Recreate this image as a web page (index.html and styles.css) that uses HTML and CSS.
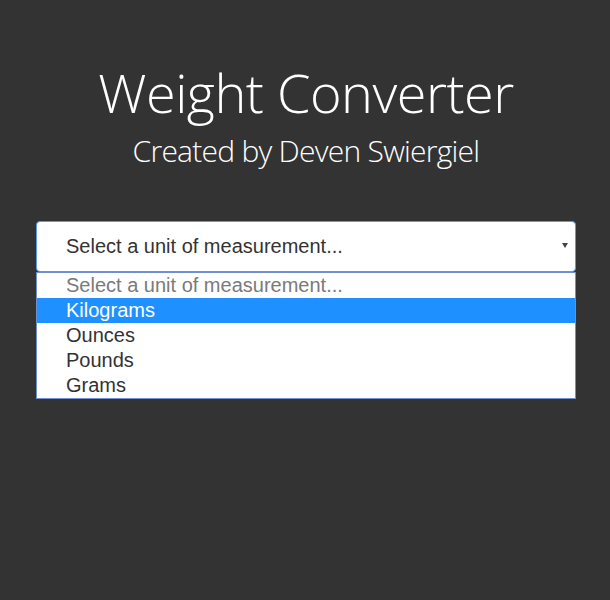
FILE: index.html
```html
<!DOCTYPE html>
<html>
<head>
<meta charset="utf-8">
<link rel="stylesheet" href="styles.css">
</head>
<body>
<div class="page">
  <header class="header">
    <h1 class="title">Weight Converter</h1>
    <p class="subtitle">Created by Deven Swiergiel</p>
  </header>
  <div class="picker">
    <div class="select">
      <span class="select-text">Select a unit of measurement...</span>
      <span class="arrow"></span>
    </div>
    <ul class="options">
      <li class="option placeholder">Select a unit of measurement...</li>
      <li class="option active">Kilograms</li>
      <li class="option">Ounces</li>
      <li class="option">Pounds</li>
      <li class="option">Grams</li>
    </ul>
  </div>
</div>
</body>
</html>
```
FILE: styles.css
```css
html, body {
  margin: 0;
  padding: 0;
  background: #333333;
  height: 100%;
}
.page {
  width: 540px;
  margin: 0 0 0 36px;
  padding-top: 61px;
}
.header {
  text-align: center;
  color: #ffffff;
  font-family: "Open Sans", "Noto Sans", sans-serif;
  font-weight: 300;
}
.title {
  margin: 0;
  font-size: 54px;
  line-height: 62px;
  font-weight: 300;
  letter-spacing: -0.5px;
}
.subtitle {
  margin: 9px 0 0;
  font-size: 30px;
  line-height: 38px;
  font-weight: 300;
  letter-spacing: -0.75px;
}
.picker {
  margin-top: 51px;
  font-family: "Liberation Sans", Arial, sans-serif;
  font-size: 20px;
}
.select {
  height: 49px;
  border: 1px solid #5b9ae6;
  border-radius: 4px;
  background: #ffffff;
  display: flex;
  align-items: center;
  justify-content: space-between;
  padding: 0 7px 0 29px;
  color: #333333;
}
.arrow {
  width: 0;
  height: 0;
  border-left: 3px solid transparent;
  border-right: 3px solid transparent;
  border-top: 5px solid #444444;
  margin-top: -2px;
}
.options {
  list-style: none;
  margin: 0;
  padding: 0;
  background: #ffffff;
  border: 1px solid #6f8fcf;
}
.option {
  height: 25px;
  line-height: 25px;
  padding-left: 29px;
  color: #333333;
}
.option.placeholder {
  color: #7a7a7a;
}
.option.active {
  background: #1e90ff;
  color: #ffffff;
}
```
